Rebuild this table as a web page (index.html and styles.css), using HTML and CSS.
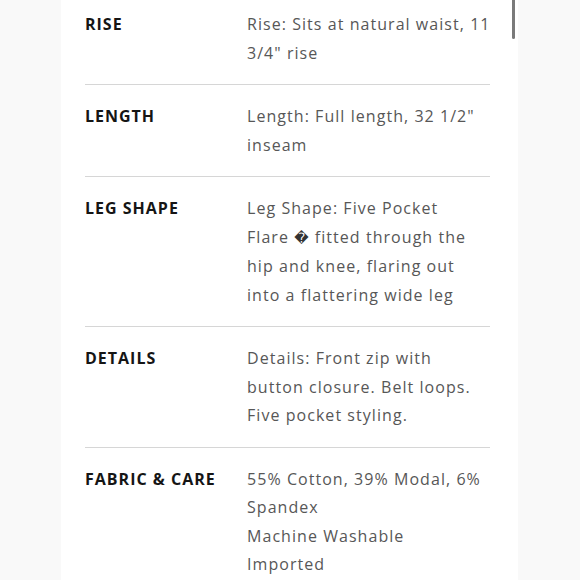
FILE: index.html
```html
<!DOCTYPE html>
<html>
<head>
<meta charset="utf-8">
<link rel="stylesheet" href="styles.css">
</head>
<body>
<div class="page">
  <div class="panel">
    <div class="row">
      <div class="label">RISE</div>
      <div class="value">Rise: Sits at natural waist, 11<br>3/4" rise</div>
    </div>
    <div class="row">
      <div class="label">LENGTH</div>
      <div class="value">Length: Full length, 32 1/2"<br>inseam</div>
    </div>
    <div class="row">
      <div class="label">LEG SHAPE</div>
      <div class="value">Leg Shape: Five Pocket<br>Flare <span class="bad">&#xFFFD;</span> fitted through the<br>hip and knee, flaring out<br>into a flattering wide leg</div>
    </div>
    <div class="row">
      <div class="label">DETAILS</div>
      <div class="value">Details: Front zip with<br>button closure. Belt loops.<br>Five pocket styling.</div>
    </div>
    <div class="row last">
      <div class="label">FABRIC &amp; CARE</div>
      <div class="value">55% Cotton, 39% Modal, 6%<br>Spandex<br>Machine Washable<br>Imported</div>
    </div>
  </div>
  <div class="scrollbar"></div>
</div>
</body>
</html>
```
FILE: styles.css
```css
html, body {
  margin: 0;
  padding: 0;
  height: 100%;
  overflow: hidden;
  background: #f9f9f9;
}
.page {
  position: relative;
  width: 580px;
  height: 580px;
  overflow: hidden;
}
.panel {
  margin-left: 61px;
  margin-top: -7px;
  width: 457px;
  box-sizing: border-box;
  padding: 0 28px 0 24px;
  background: #fff;
  min-height: 640px;
}
.row {
  display: grid;
  grid-template-columns: 162px 1fr;
  padding: 17px 0;
  border-bottom: 1px solid #d6d6d6;
}
.row.last {
  border-bottom: none;
}
.label {
  font-family: "Open Sans", sans-serif;
  font-weight: 700;
  font-size: 16px;
  line-height: 28.5px;
  color: #151515;
  letter-spacing: 1px;
}
.value {
  font-family: "Open Sans", sans-serif;
  font-weight: 400;
  font-size: 16px;
  line-height: 28.5px;
  color: #575757;
  letter-spacing: 1.05px;
  white-space: nowrap;
}
.bad {
  font-family: "DejaVu Sans", sans-serif;
  font-size: 14px;
  color: #333;
}
.scrollbar {
  position: absolute;
  left: 512px;
  top: 0;
  width: 3px;
  height: 39px;
  background: #7a7a7a;
  border-radius: 0 0 2px 2px;
}
```
